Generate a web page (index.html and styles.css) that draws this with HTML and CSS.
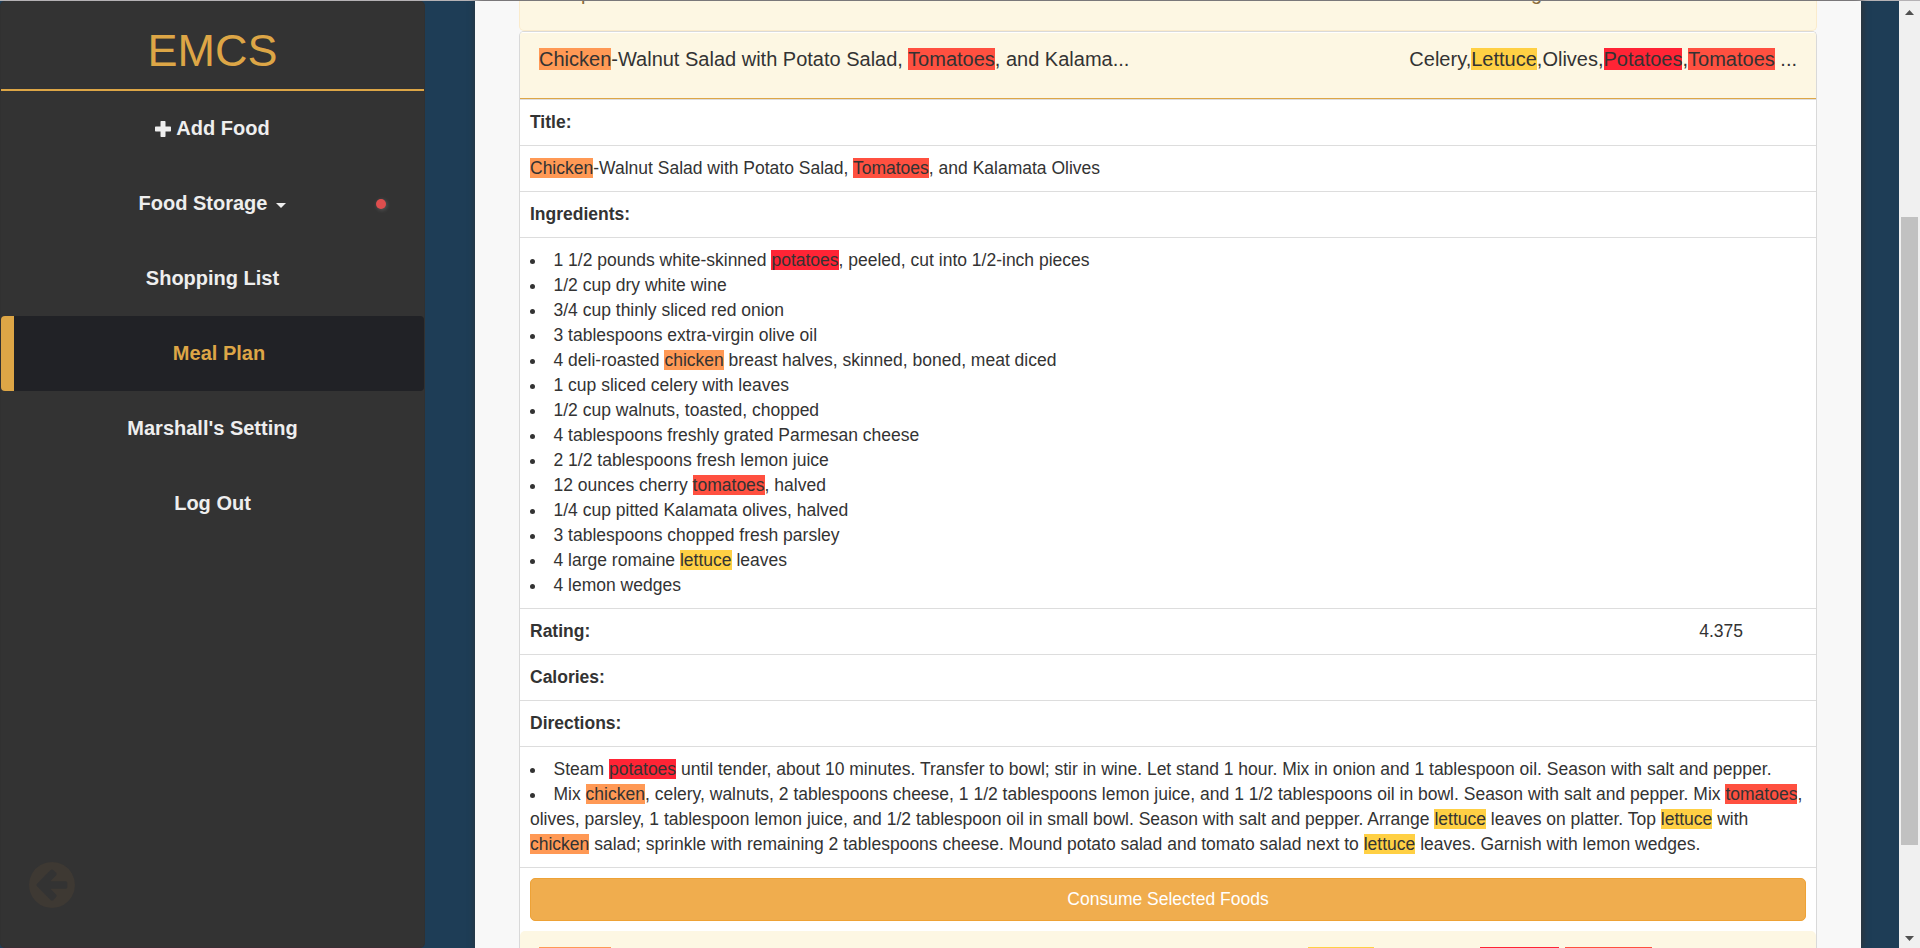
FILE: index.html
```html
<!DOCTYPE html>
<html lang="en">
<head>
<meta charset="utf-8">
<title>EMCS - Meal Plan</title>
<link rel="stylesheet" href="styles.css">
</head>
<body>
<div class="app">
  <aside class="sidebar">
    <div class="brand">EMCS</div>
    <nav class="nav">
      <a class="nav-item first"><svg class="plus" viewBox="0 0 16 16"><path d="M6.2 0h3.6q.7 0 .7.7v4.8h4.8q.7 0 .7.7v3.6q0 .7-.7.7h-4.8v4.8q0 .7-.7.7H6.2q-.7 0-.7-.7v-4.800H.7q-.7 0-.7-.7V6.200q0-.7.7-.7h4.800V.7q0-.7.7-.7z"/></svg>Add Food</a>
      <a class="nav-item">Food Storage<span class="caret"></span><span class="dot"></span></a>
      <a class="nav-item">Shopping List</a>
      <a class="nav-item active">Meal Plan</a>
      <a class="nav-item">Marshall's Setting</a>
      <a class="nav-item">Log Out</a>
    </nav>
    <svg class="back" viewBox="128 128 1536 1536"><path d="M1408 960v-128q0-26-19-45t-45-19h-502l189-189q19-19 19-45t-19-45l-91-91q-18-18-45-18t-45 18l-362 362-91 91q-18 18-18 45t18 45l91 91 362 362q18 18 45 18t45-18l91-91q18-18 18-45t-18-45l-189-189h502q26 0 45-19t19-45zm256-64q0 209-103 385.500t-279.500 279.500-385.500 103-385.500-103-279.500-279.500-103-385.500 103-385.500 279.500-279.500 385.500-103 385.500 103 279.500 279.500 103 385.500z"/></svg>
  </aside>
  <main class="content">
    <section class="panel-prev"><span>p</span><span class="prev-right">g</span></section>
    <section class="panel">
      <header class="panel-head">
        <span><mark class="orange">Chicken</mark>-Walnut Salad with Potato Salad, <mark class="tomato">Tomatoes</mark>, and Kalama...</span>
        <span>Celery,<mark class="yellow">Lettuce</mark>,Olives,<mark class="red">Potatoes</mark>,<mark class="tomato">Tomatoes</mark> ...</span>
      </header>
      <div class="row"><b>Title:</b></div>
      <div class="row"><mark class="orange">Chicken</mark>-Walnut Salad with Potato Salad, <mark class="tomato">Tomatoes</mark>, and Kalamata Olives</div>
      <div class="row"><b>Ingredients:</b></div>
      <ul class="row list">
        <li>1 1/2 pounds white-skinned <mark class="red">potatoes</mark>, peeled, cut into 1/2-inch pieces</li>
        <li>1/2 cup dry white wine</li>
        <li>3/4 cup thinly sliced red onion</li>
        <li>3 tablespoons extra-virgin olive oil</li>
        <li>4 deli-roasted <mark class="orange">chicken</mark> breast halves, skinned, boned, meat diced</li>
        <li>1 cup sliced celery with leaves</li>
        <li>1/2 cup walnuts, toasted, chopped</li>
        <li>4 tablespoons freshly grated Parmesan cheese</li>
        <li>2 1/2 tablespoons fresh lemon juice</li>
        <li>12 ounces cherry <mark class="tomato">tomatoes</mark>, halved</li>
        <li>1/4 cup pitted Kalamata olives, halved</li>
        <li>3 tablespoons chopped fresh parsley</li>
        <li>4 large romaine <mark class="yellow">lettuce</mark> leaves</li>
        <li>4 lemon wedges</li>
      </ul>
      <div class="row split"><b>Rating:</b><span class="rating">4.375</span></div>
      <div class="row"><b>Calories:</b></div>
      <div class="row"><b>Directions:</b></div>
      <ul class="row list">
        <li>Steam <mark class="red">potatoes</mark> until tender, about 10 minutes. Transfer to bowl; stir in wine. Let stand 1 hour. Mix in onion and 1 tablespoon oil. Season with salt and pepper.</li>
        <li>Mix <mark class="orange">chicken</mark>, celery, walnuts, 2 tablespoons cheese, 1 1/2 tablespoons lemon juice, and 1 1/2 tablespoons oil in bowl. Season with salt and pepper. Mix <mark class="tomato">tomatoes</mark>, olives, parsley, 1 tablespoon lemon juice, and 1/2 tablespoon oil in small bowl. Season with salt and pepper. Arrange <mark class="yellow">lettuce</mark> leaves on platter. Top <mark class="yellow">lettuce</mark> with <mark class="orange">chicken</mark> salad; sprinkle with remaining 2 tablespoons cheese. Mound potato salad and tomato salad next to <mark class="yellow">lettuce</mark> leaves. Garnish with lemon wedges.</li>
      </ul>
      <div class="action"><button class="btn">Consume Selected Foods</button></div>
      <div class="panel-next">
        <i class="chip orange w-chicken"></i>
        <i class="chip yellow w-lettuce"></i>
        <i class="chip red w-potatoes"></i>
        <i class="chip tomato w-tomatoes"></i>
      </div>
    </section>
  </main>
  <div class="scrollbar">
    <svg class="arrow" viewBox="0 0 9 5"><path d="M0 5L4.500 0 9 5z"/></svg>
    <div class="track"><div class="thumb"></div></div>
    <svg class="arrow" viewBox="0 0 9 5"><path d="M0 0L4.500 5 9 0z"/></svg>
  </div>
</div>
</body>
</html>
```

FILE: styles.css
```css
* { box-sizing: border-box; }
html, body { margin: 0; height: 100%; overflow: hidden; }
body {
  font: 17.5px/25px "Liberation Sans", Arial, sans-serif;
  color: #333;
  background: #1e3d56;
}
.app {
  display: flex;
  height: 948px;
  border-top: 1px solid #b5b2b5;
}
.sidebar {
  width: 425px;
  height: 947px;
  flex: none;
  display: flex;
  flex-direction: column;
  background: #333;
  border: 1px solid #313131;
  border-top: 0;
  border-bottom-color: #392d34;
  border-radius: 5px;
  color: #eee;
}
.brand {
  height: 90px;
  padding-top: 25px;
  border-bottom: 2px solid #dda646;
  font-size: 45px;
  line-height: 50px;
  text-align: center;
  color: #dda646;
}
.nav { flex: 1; }
.nav-item {
  position: relative;
  display: flex;
  align-items: center;
  justify-content: center;
  height: 75px;
  border-radius: 4px;
  font-size: 20px;
  font-weight: bold;
}
.active {
  background: #212226;
  border-left: 13px solid #dda646;
  color: #dda646;
}
.plus { width: 16px; height: 16px; margin-right: 5px; fill: #eee; }
.caret {
  margin: 4px 0 0 9px;
  border: 5px solid transparent;
  border-top-color: #eee;
  border-bottom: 0;
}
.dot {
  position: absolute;
  left: 375px;
  top: 33px;
  width: 10px;
  height: 10px;
  border-radius: 50%;
  background: #de4e4e;
  box-shadow: 1px 1px 4px rgba(255, 255, 255, .2);
}
.back { width: 46px; height: 46px; margin: 0 0 39px 28px; fill: #3e3933; }
.content {
  width: 1386px;
  flex: none;
  margin-left: 50px;
  padding: 0 44px 0 44px;
  overflow: visible;
  background: #f8f8f8;
  box-shadow: 1px 0 7px #333;
}
.panel-prev {
  display: flex;
  height: 30px;
  padding: 0 274px 0 61px;
  justify-content: space-between;
  overflow: hidden;
  background: #fdf7e3;
  border: 1px solid #faebcc;
  border-top: 0;
  border-radius: 0 0 5px 5px;
  font-size: 20px;
  line-height: 28px;
  color: #8a6d3b;
}
.panel-prev span { margin-top: -22px; }
.panel {
  height: 917px;
  overflow: hidden;
  background: #fff;
  border: 1px solid #d9d9d9;
  border-bottom: 0;
  border-radius: 5px 5px 0 0;
}
.panel-head {
  display: flex;
  justify-content: space-between;
  height: 67px;
  padding: 12px 19px;
  background: #fdf7e3;
  border-top: 1px solid #fff;
  border-bottom: 1px solid #dda646;
  font-size: 20px;
  line-height: 28px;
}
.row {
  margin: 0;
  padding: 10px;
  border-top: 1px solid #ddd;
}
.list { list-style: disc inside; }
.split { display: flex; justify-content: space-between; }
.rating { margin-right: 63px; }
mark { color: inherit; }
.orange { background: #ff9955; }
.tomato { background: #ff5040; }
.yellow { background: #ffd044; }
.red { background: #ff2435; }
.action { padding: 10px; border-top: 1px solid #ddd; }
.btn {
  display: block;
  width: 100%;
  height: 43px;
  border: 1px solid #eea236;
  border-radius: 5px;
  background: #f0ad4e;
  font: inherit;
  color: #fff;
}
.panel-next {
  display: flex;
  height: 40px;
  padding: 16px 19px 0;
  background: #fdf7e3;
  border-radius: 5px 5px 0 0;
}
.chip { height: 23px; }
.w-chicken { width: 72px; }
.w-lettuce { width: 66px; margin-left: 697px; }
.w-potatoes { width: 79px; margin-left: 106px; }
.w-tomatoes { width: 87px; margin-left: 6px; }
.scrollbar {
  display: flex;
  flex-direction: column;
  align-items: center;
  width: 21px;
  margin-left: auto;
  padding: 9px 0 7px;
  background: #f0f0f0;
}
.arrow { width: 9px; height: 5px; fill: #505050; }
.track { flex: 1; width: 17px; padding-top: 202px; }
.thumb { height: 628px; background: #c1c1c1; }
```
